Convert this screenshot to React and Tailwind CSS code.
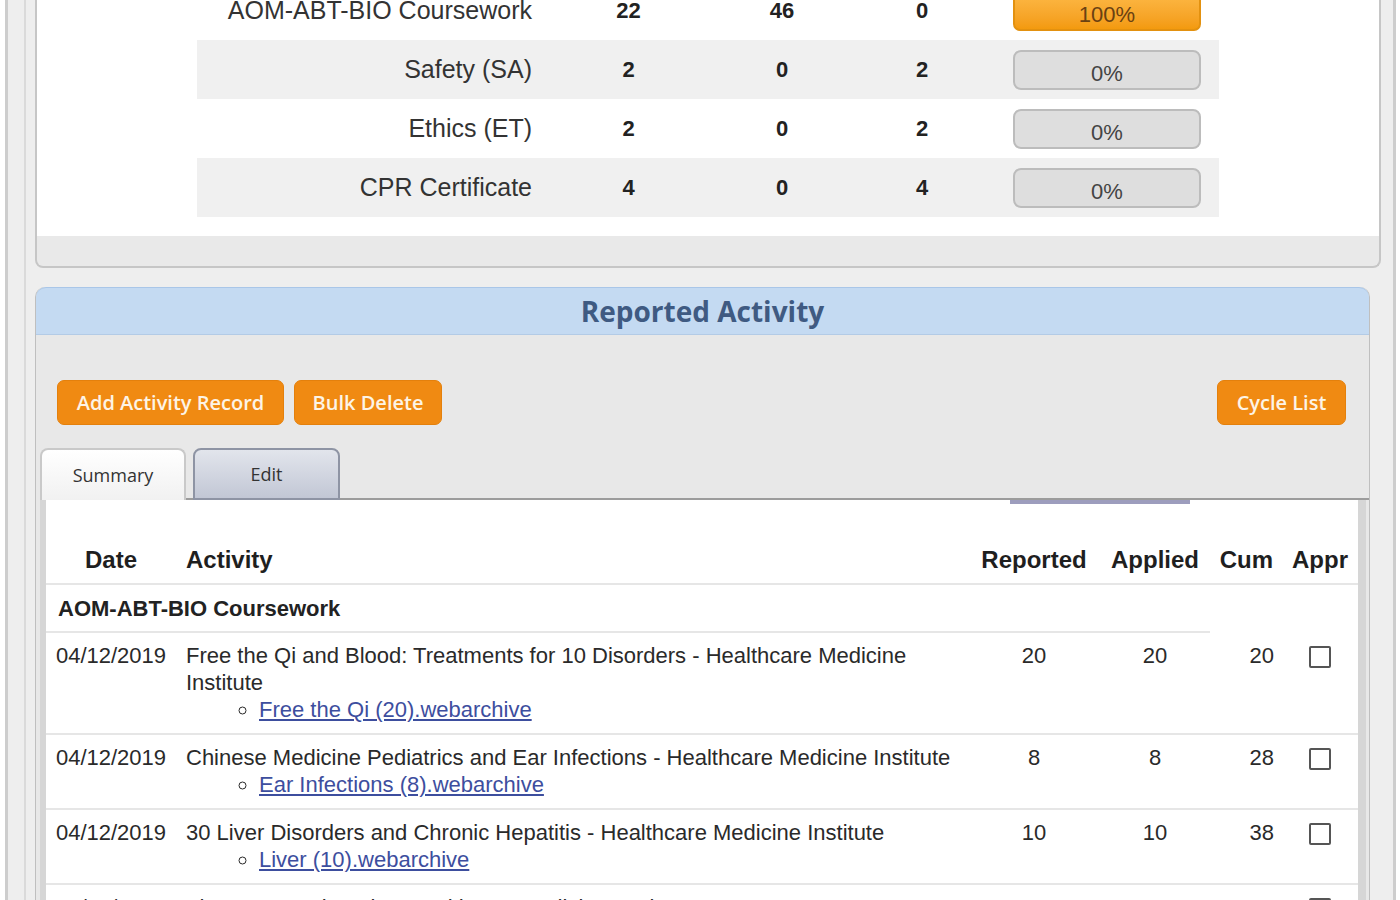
import React from 'react'

const summaryRows = [
  { label: 'AOM-ABT-BIO Coursework', required: 22, earned: 46, remaining: 0, pct: 100 },
  { label: 'Safety (SA)', required: 2, earned: 0, remaining: 2, pct: 0 },
  { label: 'Ethics (ET)', required: 2, earned: 0, remaining: 2, pct: 0 },
  { label: 'CPR Certificate', required: 4, earned: 0, remaining: 4, pct: 0 },
]

const activities = [
  {
    date: '04/12/2019',
    title: ['Free the Qi and Blood: Treatments for 10 Disorders - Healthcare Medicine', 'Institute'],
    file: 'Free the Qi (20).webarchive',
    reported: 20,
    applied: 20,
    cum: 20,
  },
  {
    date: '04/12/2019',
    title: ['Chinese Medicine Pediatrics and Ear Infections - Healthcare Medicine Institute'],
    file: 'Ear Infections (8).webarchive',
    reported: 8,
    applied: 8,
    cum: 28,
  },
  {
    date: '04/12/2019',
    title: ['30 Liver Disorders and Chronic Hepatitis - Healthcare Medicine Institute'],
    file: 'Liver (10).webarchive',
    reported: 10,
    applied: 10,
    cum: 38,
  },
  {
    date: '04/12/2019',
    title: ['The Menstrual Cycle - Healthcare Medicine Institute'],
    file: 'Menstrual Cycle (8).webarchive',
    reported: 8,
    applied: 8,
    cum: 46,
  },
]

function ProgressBar({ pct }) {
  if (pct >= 100) {
    return (
      <div className="ml-[22px] w-[188px] h-[40px] rounded-[7px] border-2 border-[#e3910f] bg-linear-to-b from-[#fdb945] to-[#f39a0d] flex items-end justify-center pb-[3px]">
        <span className="text-[22px] leading-[22px] text-[#6a4112]">{pct}%</span>
      </div>
    )
  }
  return (
    <div className="ml-[22px] w-[188px] h-[40px] rounded-[8px] border-2 border-[#bcbcbc] bg-[#dedede] flex items-end justify-center pb-[3px]">
      <span className="text-[22px] leading-[22px] text-[#444]">{pct}%</span>
    </div>
  )
}

function OrangeButton({ children, width }) {
  return (
    <button className={`${width} h-[45px] rounded-[7px] bg-[#f08a12] border border-[#e4800c] text-[20px] font-semibold text-[#fdf4e6] font-['Open_Sans',sans-serif] flex items-center justify-center`}>
      {children}
    </button>
  )
}

export default function App() {
  return (
    <div className="h-[900px] overflow-hidden bg-white font-['Liberation_Sans',Arial,sans-serif]">
      <div className="ml-[5px] w-[1391px] h-full border-x-[3px] border-[#cdcdcd] bg-[#eeeeee] flex flex-col">
        <div className="ml-[16px] flex-1 border-l-2 border-[#dadada] pl-[9px] pr-[12px] flex flex-col">
          {/* Requirement summary */}
          <div className="-mt-[19px] border-x-2 border-b-2 border-[#c6c6c6] rounded-b-[8px] bg-[#e9e9e9] overflow-hidden">
            <div className="bg-white pb-[19px]">
              <div className="mx-auto w-[1022px]">
                {summaryRows.map((row, i) => (
                  <div
                    key={row.label}
                    className={`grid grid-cols-[349px_165px_142px_138px_228px] h-[59px] items-center ${i % 2 === 1 ? 'bg-[#f0f0f0]' : 'bg-white'}`}
                  >
                    <div className="text-right pr-[14px] text-[25px] text-[#333]">{row.label}</div>
                    <div className="text-center text-[22px] font-bold text-[#222]">{row.required}</div>
                    <div className="text-center text-[22px] font-bold text-[#222]">{row.earned}</div>
                    <div className="text-center text-[22px] font-bold text-[#222]">{row.remaining}</div>
                    <div>
                      <ProgressBar pct={row.pct} />
                    </div>
                  </div>
                ))}
              </div>
            </div>
            <div className="h-[30px]" />
          </div>

          {/* Reported Activity panel */}
          <div className="mt-[19px] mr-[11px] flex-1 border-x border-[#bfbfbf] bg-[#e8e8e8] rounded-t-[10px]">
            <div className="h-[48px] rounded-t-[10px] bg-[#c4daf2] border-t border-[#a9c6e8] border-b border-b-[#b3cbe6] flex items-center justify-center">
              <h2 className="text-[28px] font-bold text-[#3f5a82] font-['Open_Sans',sans-serif]">Reported Activity</h2>
            </div>

            <div className="pt-[45px] pl-[21px] pr-[23px] flex justify-between">
              <div className="flex gap-[10px]">
                <OrangeButton width="w-[227px]">Add Activity Record</OrangeButton>
                <OrangeButton width="w-[148px]">Bulk Delete</OrangeButton>
              </div>
              <OrangeButton width="w-[129px]">Cycle List</OrangeButton>
            </div>

            {/* Tabs */}
            <div className="mt-[23px] pl-[4px] flex items-end font-['Open_Sans',sans-serif]">
              <div className="w-[146px] h-[52px] rounded-t-[8px] border-2 border-b-0 border-[#c9c9c9] bg-linear-to-b from-white to-[#f1f1f1] flex items-center justify-center text-[18px] font-medium text-[#333]">
                Summary
              </div>
              <div className="w-[7px] h-[2px] bg-[#9c9c9c]" />
              <div className="w-[147px] h-[52px] rounded-t-[8px] border-2 border-[#8e94a4] bg-linear-to-b from-[#e2e5ec] to-[#c2c7d5] flex items-center justify-center text-[18px] font-medium text-[#333]">
                Edit
              </div>
              <div className="flex-1 h-[2px] bg-[#9c9c9c]" />
            </div>

            {/* Activity table */}
            <div className="ml-[4px] mr-[3px] border-l-[6px] border-r-[8px] border-[#d6d6d6] bg-white text-[22px] text-[#2a2a2a]">
              <div className="ml-[964px] w-[180px] h-[4px] bg-[#9d9dbd]" />
              <div className="grid grid-cols-[130px_792px_132px_110px_72px_76px] h-[81px] items-end pb-[8px] border-b-2 border-[#e6e6e6] text-[24px] font-bold text-[#1f1f1f] leading-[30px]">
                <div className="text-center">Date</div>
                <div className="pl-[10px]">Activity</div>
                <div className="text-center">Reported</div>
                <div className="text-center">Applied</div>
                <div className="text-right pr-[9px]">Cum</div>
                <div className="text-center">Appr</div>
              </div>

              <div className="w-[1164px] h-[48px] border-b-2 border-[#e6e6e6] flex items-center pl-[12px] font-bold text-[#222]">
                AOM-ABT-BIO Coursework
              </div>

              {activities.map((a) => (
                <div
                  key={a.file}
                  className="grid grid-cols-[130px_792px_132px_110px_72px_76px] pt-[9px] pb-[10px] border-b-2 border-[#e6e6e6] leading-[27px]"
                >
                  <div className="text-center">{a.date}</div>
                  <div className="pl-[10px]">
                    {a.title.map((line) => (
                      <div key={line}>{line}</div>
                    ))}
                    <ul className="list-[circle] pl-[73px]">
                      <li>
                        <a href="#" className="text-[#3d4e9e] underline">{a.file}</a>
                      </li>
                    </ul>
                  </div>
                  <div className="text-center">{a.reported}</div>
                  <div className="text-center">{a.applied}</div>
                  <div className="text-right pr-[8px]">{a.cum}</div>
                  <div className="flex justify-center">
                    <span className="mt-[4px] w-[22px] h-[22px] border-2 border-[#555] rounded-[2px] bg-white" />
                  </div>
                </div>
              ))}
            </div>
          </div>
        </div>
      </div>
    </div>
  )
}
